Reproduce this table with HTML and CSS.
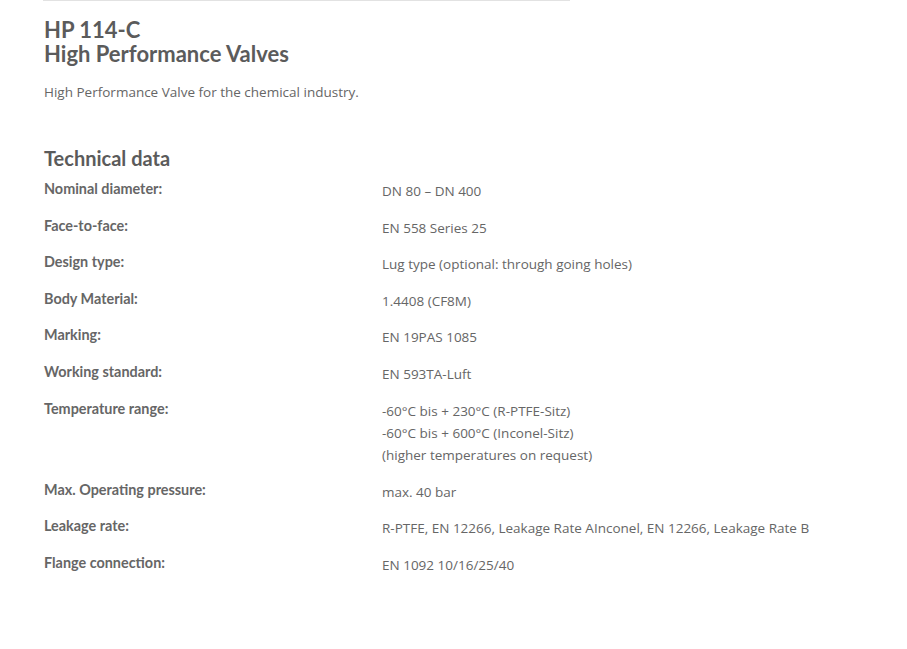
FILE: index.html
```html
<!DOCTYPE html>
<html>
<head>
<meta charset="utf-8">
<link rel="stylesheet" href="styles.css">
</head>
<body>
<div class="page">
  <div class="media-box"></div>
  <h1 class="title"><span class="title-line">HP 114-C</span><span class="title-line">High Performance Valves</span></h1>
  <p class="intro">High Performance Valve for the chemical industry.</p>
  <h2 class="section-title">Technical data</h2>
  <div class="specs">
    <div class="label">Nominal diameter:</div><div class="value">DN 80 – DN 400</div>
    <div class="label">Face-to-face:</div><div class="value">EN 558 Series 25</div>
    <div class="label">Design type:</div><div class="value">Lug type (optional: through going holes)</div>
    <div class="label">Body Material:</div><div class="value">1.4408 (CF8M)</div>
    <div class="label">Marking:</div><div class="value">EN 19PAS 1085</div>
    <div class="label">Working standard:</div><div class="value">EN 593TA-Luft</div>
    <div class="label">Temperature range:</div><div class="value">-60°C bis + 230°C (R-PTFE-Sitz)<br>-60°C bis + 600°C (Inconel-Sitz)<br>(higher temperatures on request)</div>
    <div class="label">Max. Operating pressure:</div><div class="value">max. 40 bar</div>
    <div class="label">Leakage rate:</div><div class="value">R-PTFE, EN 12266, Leakage Rate AInconel, EN 12266, Leakage Rate B</div>
    <div class="label">Flange connection:</div><div class="value">EN 1092 10/16/25/40</div>
  </div>
</div>
</body>
</html>
```

FILE: styles.css
```css
html, body {
  margin: 0;
  padding: 0;
  background: #fff;
}
.page {
  padding: 0 0 0 44px;
  color: #666;
}
.media-box {
  margin-left: -1px;
  width: 525px;
  height: 1px;
  margin-top: -1px;
  border: 1px solid #e2e2e2;
  border-top: none;
}
.title {
  margin: 17px 0 0 0;
  font-family: Lato, sans-serif;
  font-weight: 700;
  font-size: 22px;
  line-height: 24px;
  color: #5b5b5b;
}
.title-line {
  display: block;
}
.intro {
  margin: 15px 0 0 0;
  font-family: "Open Sans", sans-serif;
  font-size: 13.5px;
  line-height: 22px;
  color: #666;
}
.section-title {
  margin: 42px 0 0 0;
  font-family: Lato, sans-serif;
  font-weight: 700;
  font-size: 20px;
  line-height: 26px;
  color: #5b5b5b;
}
.specs {
  display: grid;
  grid-template-columns: 338px 1fr;
  row-gap: 14.3px;
  margin-top: 9px;
}
.label {
  font-family: Lato, sans-serif;
  font-weight: 700;
  font-size: 14.4px;
  line-height: 17px;
  color: #666;
}
.value {
  font-family: "Open Sans", sans-serif;
  font-size: 13.5px;
  line-height: 22.3px;
  color: #666;
}
```
